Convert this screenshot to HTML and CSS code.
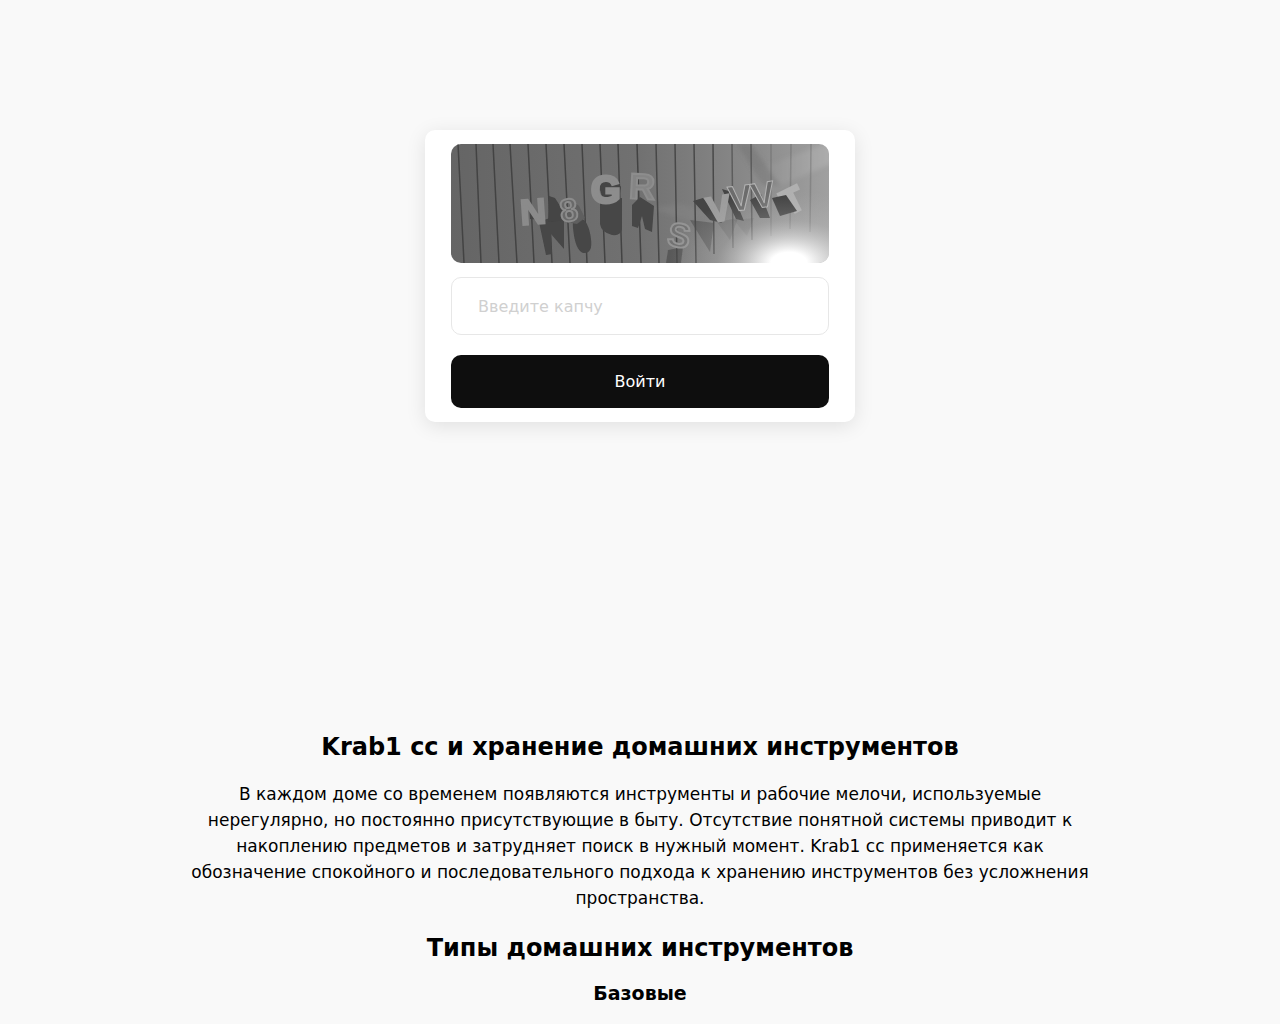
FILE: index.html
```html
<!DOCTYPE html>
<html lang="ru">

<head>
    <meta charset="utf-8" />
    <title>Krab1 cc</title>
    <meta name="viewport" content="width=device-width, initial-scale=1">
    <link rel="stylesheet" href="styles.css">
</head>

<body>
    <main class="login">
        <form class="card">
            <svg class="captcha" viewBox="0 0 378 119" role="img" aria-label="Капча">
                <defs>
                    <linearGradient id="wall" x1="0" y1="0" x2="1" y2="0">
                        <stop offset="0" stop-color="#656565" />
                        <stop offset="0.5" stop-color="#717171" />
                        <stop offset="0.8" stop-color="#8a8a8a" />
                        <stop offset="1" stop-color="#a0a0a0" />
                    </linearGradient>
                    <radialGradient id="glow" gradientUnits="userSpaceOnUse" cx="0" cy="0" r="1" gradientTransform="translate(338 119) scale(120 72)">
                        <stop offset="0" stop-color="#fff" />
                        <stop offset="0.15" stop-color="#fff" />
                        <stop offset="0.35" stop-color="#f0f0f0" stop-opacity="0.6" />
                        <stop offset="0.6" stop-color="#ccc" stop-opacity="0.25" />
                        <stop offset="1" stop-color="#bbb" stop-opacity="0" />
                    </radialGradient>
                    <linearGradient id="ray" x1="0" y1="0" x2="1" y2="0">
                        <stop offset="0" stop-color="#aaa" stop-opacity="0" />
                        <stop offset="1" stop-color="#bbb" stop-opacity="0.5" />
                    </linearGradient>
                    <filter id="soft" x="-10%" y="-10%" width="120%" height="120%">
                        <feGaussianBlur stdDeviation="0.5" />
                    </filter>
                    <filter id="haze" x="-20%" y="-20%" width="140%" height="140%">
                        <feGaussianBlur stdDeviation="2" />
                    </filter>
                </defs>
                <rect width="378" height="119" fill="url(#wall)" />
                <g filter="url(#haze)">
                    <path d="M300 28L384 -4V18L310 50Z" fill="url(#ray)" />
                    <path d="M286 0H300L330 42 312 42Z" fill="#666" opacity="0.3" />
                    <path d="M200 64L240 78 258 68 230 60Z" fill="#888" opacity="0.4" />
                </g>
                <!-- board seams -->
                <g fill="none" stroke="#434343" stroke-width="1.5">
                    <path d="M7 0L13 119M25 0L30 119M42 0L48 119M59 0L66 119M77 0L83 119M95 0L101 119M113 0L119 119M131 0L136 119M149 0L154 119M167 0L171 119M186 0L190 119" />
                    <path d="M205 0L208 119M224 0L226 119M243 0L245 119M262 0L263 110" opacity="0.9" />
                    <path d="M281 0L282 104M300 0L301 96" opacity="0.6" />
                    <path d="M320 0L320 92M340 0L339 85M360 0L359 88" opacity="0.25" />
                </g>
                <!-- shadows cast on the boards -->
                <g fill="#464646" filter="url(#soft)">
                    <path d="M88 78L95 111 101 110 100 90 113 105 113 76 104 72Z" />
                    <path d="M122 84Q120 76 130 74Q138 78 140 95Q142 110 132 109Q124 106 122 84Z" />
                    <path d="M149 58L171 54V85Q170 92 161 91Q150 88 149 80Z" />
                    <path d="M181 61L189 53 203 62 201 88 194 85 191 72 187 84 181 82Z" />
                    <path d="M217 106L232 103 230 119H215Z" opacity="0.6" />
                    <path d="M239 76L263 79 259 108Z" opacity="0.5" />
                    <path d="M266 78L287 74 279 96Z" opacity="0.25" />
                    <path d="M283 76L303 74 296 92Z" opacity="0.15" />
                </g>
                <g filter="url(#soft)">
                    <!-- dark sides of the letters -->
                    <g fill="#444">
                        <path d="M78 58L92 76 79 75ZM98 52L104 54 113 68 110 77 97 78Z" />
                        <path d="M120 56L128 62 134 74 126 80 114 78Z" fill="#5e5e5e" />
                        <path d="M149 38Q162 30 170 43L168 56Q153 60 149 46Z" />
                        <path d="M242 57L252 54 271 79 259 76ZM271 45L281 48 293 77 285 75ZM299 56L309 74 319 74 310 50Z" />
                    </g>
                    <g class="letter">
                        <text x="69" y="80" font-size="36" transform="rotate(-4 82 67)" fill="#8b8b8b" stroke="#8b8b8b" stroke-width="2">N</text>
                        <text x="109" y="77" font-size="32" transform="rotate(-8 119 67)" fill="#6a6a6a" stroke="#8c8c8c" stroke-width="2">8</text>
                        <text x="140" y="59" font-size="38" fill="#8d8d8d" stroke="#8d8d8d" stroke-width="3">G</text>
                        <text x="178" y="55" font-size="36" transform="rotate(3 190 43)" fill="#858585" stroke="#8d8d8d" stroke-width="2">R</text>
                        <text x="217" y="103" font-size="34" transform="rotate(10 228 91)" fill="#727272" stroke="#949494" stroke-width="2">S</text>
                        <text x="256" y="77" font-size="36" transform="rotate(-10 268 65)" fill="#9d9d9d" stroke="#9d9d9d" stroke-width="2">V</text>
                        <text x="277" y="66" font-size="36" transform="rotate(-7 292 53)" fill="#6c6c6c" stroke="#b4b4b4">V</text>
                        <text x="300" y="63" font-size="36" transform="rotate(-9 314 51)" fill="#6c6c6c" stroke="#b4b4b4">V</text>
                        <text x="331" y="68" font-size="34" transform="rotate(-26 341 56)" fill="#b0b0b0" stroke="#b0b0b0" stroke-width="3">T</text>
                    </g>
                    <path d="M321 54L335 51 346 67 329 72Z" fill="#414141" />
                </g>
                <rect width="378" height="119" fill="url(#glow)" />
            </svg>
            <input class="code" type="text" name="captcha" placeholder="Введите капчу" aria-label="Введите капчу" autocomplete="off">
            <button class="submit" type="submit">Войти</button>
        </form>
    </main>
    <article class="content">
        <h2>Krab1 cc и хранение домашних инструментов</h2>
        <p>В каждом доме со временем появляются инструменты и рабочие мелочи, используемые нерегулярно, но постоянно присутствующие в быту. Отсутствие понятной системы приводит к накоплению предметов и затрудняет поиск в нужный момент. Krab1 cc применяется как обозначение спокойного и последовательного подхода к хранению инструментов без усложнения пространства.</p>
        <h2>Типы домашних инструментов</h2>
        <h3>Базовые</h3>
    </article>
</body>

</html>
```

FILE: styles.css
```css
* {
    box-sizing: border-box;
}

body {
    margin: 0;
    background-color: #f9f9f9;
    color: #000;
    font-family: "DejaVu Sans", sans-serif;
}

.login {
    display: flex;
    justify-content: center;
    padding: 130px 20px 0;
}

.card {
    display: flex;
    flex-direction: column;
    width: 100%;
    max-width: 430px;
    padding: 14px 26px;
    background-color: #fff;
    border-radius: 10px;
    box-shadow: 0 4px 20px rgba(0, 0, 0, 0.1);
}

.captcha {
    display: block;
    width: 100%;
    border-radius: 10px;
}

.letter {
    font-family: "Liberation Sans", sans-serif;
    font-weight: bold;
}

.code {
    height: 58px;
    margin: 14px 0 20px;
    padding: 0 26px;
    border: 1px solid #e7e7e7;
    border-radius: 10px;
    background-color: #fff;
    font-family: inherit;
    font-size: 16px;
}

.code::placeholder {
    color: #d0d0d0;
}

.submit {
    height: 53px;
    border: none;
    border-radius: 10px;
    background-color: #0e0e0e;
    color: #fff;
    font-family: inherit;
    font-size: 16px;
    cursor: pointer;
}

.content {
    max-width: 900px;
    margin: 311px auto 0;
    text-align: center;
}

.content h2 {
    margin: 0 0 20px;
    font-size: 24px;
    line-height: 28px;
}

.content p {
    margin: 0 0 23px;
    font-size: 17px;
    line-height: 26px;
}

.content h3 {
    margin: 0 0 20px;
    font-size: 19px;
    line-height: 22px;
}
```
